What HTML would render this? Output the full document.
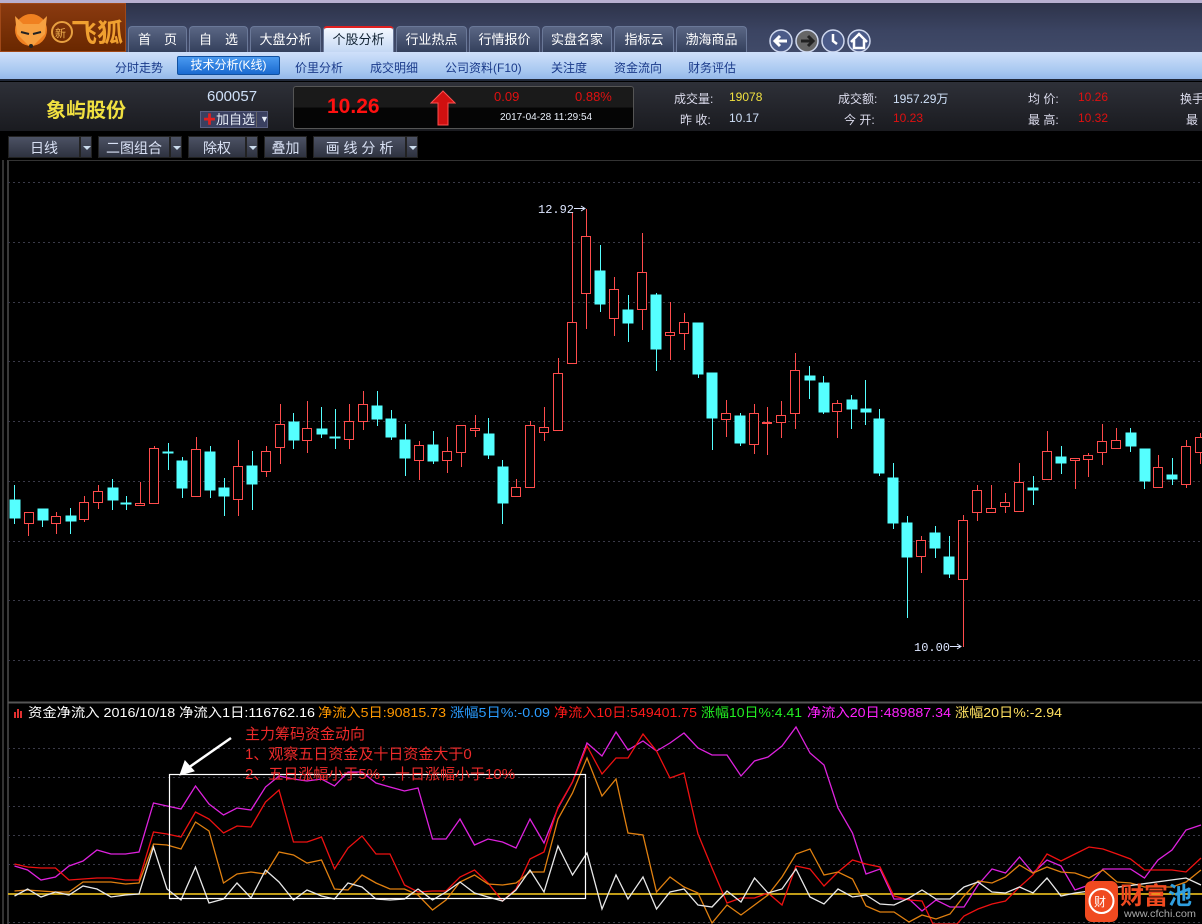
<!DOCTYPE html>
<html><head><meta charset="utf-8">
<style>
*{margin:0;padding:0;box-sizing:border-box}
body{width:1202px;height:924px;overflow:hidden;background:#000;font-family:"Liberation Sans","Noto Sans CJK SC",sans-serif;position:relative}
.abs{position:absolute;white-space:nowrap}
#top{left:0;top:0;width:1202px;height:52px;background:linear-gradient(#2c3147,#3b4462 60%,#404a68)}
#topline{left:0;top:0;width:1202px;height:3px;background:#b8b0d0}
#logo{left:0;top:3px;width:126px;height:49px;background:linear-gradient(#8a3a10,#6a2800);border:1px solid #a04818}
.tab{top:26px;height:26px;background:linear-gradient(#5a6684,#34405c);border:1px solid #6a7898;border-bottom:none;border-radius:4px 4px 0 0;color:#fff;font-size:13px;text-align:center;line-height:26px}
.tab.on{background:linear-gradient(#f4f8ff,#c4d8f4);color:#123;border-top:2px solid #e02020;line-height:24px}
#sub{left:0;top:52px;width:1202px;height:29px;background:linear-gradient(#cfe0fa,#a8c8f0 70%,#94b8ea);border-bottom:2px solid #202838}
.s{top:59px;font-size:12px;color:#1a3a8a}
#sbtn{left:177px;top:56px;width:103px;height:19px;background:linear-gradient(#4a9af0,#1a6ad0);border:1px solid #1050a0;border-radius:2px;color:#fff;font-size:12px;text-align:center;line-height:17px}
#info{left:0;top:82px;width:1202px;height:49px;background:linear-gradient(#2e3038,#1a1b20)}
#qbox{left:293px;top:86px;width:341px;height:43px;background:linear-gradient(#1a1a1a 50%,#050505 50%);border:1px solid #555;border-radius:3px}
.i{font-size:12px;color:#dde}
.btn{top:136px;height:22px;background:linear-gradient(#4c5264,#2e3240);color:#d8e0f4;font-size:14px;line-height:22px;text-align:center;border:1px solid #222}
.dd{top:136px;width:12px;height:22px;background:linear-gradient(#4c5264,#2e3240);border:1px solid #222}
.dd:after{content:"";position:absolute;left:2px;top:9px;border:4px solid transparent;border-top:4px solid #cde}
</style></head><body>
<div class="abs" id="top"></div><div class="abs" id="topline"></div>
<div class="abs" id="logo">
<svg width="126" height="49"><circle cx="30" cy="26" r="16" fill="#f08020"/><path d="M14 12 L22 20 L38 20 L46 12 L44 30 L30 44 L16 30Z" fill="#f7a040"/><path d="M20 28 L28 30 M32 30 L40 28" stroke="#222" stroke-width="2"/><circle cx="30" cy="42" r="2" fill="#222"/>
<circle cx="61" cy="28" r="10" fill="none" stroke="#e8a040" stroke-width="2"/><text x="54" y="33" font-size="11" fill="#f0b050" font-family="Noto Sans CJK SC">新</text>
<text x="70" y="38" font-size="26" font-weight="bold" fill="#f0a030" font-family="Noto Sans CJK SC">飞狐</text></svg></div>
<div class="abs tab" style="left:128px;width:59px">首　页</div>
<div class="abs tab" style="left:189px;width:59px">自　选</div>
<div class="abs tab" style="left:250px;width:71px">大盘分析</div>
<div class="abs tab on" style="left:323px;width:71px">个股分析</div>
<div class="abs tab" style="left:396px;width:71px">行业热点</div>
<div class="abs tab" style="left:469px;width:71px">行情报价</div>
<div class="abs tab" style="left:542px;width:70px">实盘名家</div>
<div class="abs tab" style="left:614px;width:60px">指标云</div>
<div class="abs tab" style="left:676px;width:71px">渤海商品</div>
<svg class="abs" style="left:766px;top:28px" width="108" height="26">
<g stroke="#cfd8ee" stroke-width="1.5"><circle cx="15" cy="13" r="11" fill="#4a5a88"/><circle cx="41" cy="13" r="11" fill="#666"/><circle cx="67" cy="13" r="11" fill="#4a5a88"/><circle cx="93" cy="13" r="11" fill="#4a5a88"/></g>
<path d="M21 13H10M14 8L9 13L14 18" stroke="#fff" stroke-width="3" fill="none"/>
<path d="M35 13H46M42 8L47 13L42 18" stroke="#222" stroke-width="3" fill="none"/>
<path d="M67 6V13L71 16" stroke="#fff" stroke-width="2.5" fill="none"/>
<path d="M85 14L93 6L101 14M88 12V20H98V12" stroke="#fff" stroke-width="2.5" fill="none"/></svg>
<div class="abs" id="sub"></div>
<div class="abs s" style="left:115px">分时走势</div>
<div class="abs" id="sbtn">技术分析(K线)</div>
<div class="abs s" style="left:295px">价里分析</div>
<div class="abs s" style="left:370px">成交明细</div>
<div class="abs s" style="left:445px">公司资料(F10)</div>
<div class="abs s" style="left:551px">关注度</div>
<div class="abs s" style="left:614px">资金流向</div>
<div class="abs s" style="left:688px">财务评估</div>
<div class="abs" id="info"></div>
<div class="abs" style="left:46px;top:94px;font-size:20px;font-weight:bold;color:#f0e040">象屿股份</div>
<div class="abs" style="left:207px;top:88px;font-size:15px;color:#cfe0f8">600057</div>
<div class="abs" style="left:200px;top:111px;width:68px;height:17px;background:#3a4060;border:1px solid #5a6080;font-size:13px;color:#e8eef8;line-height:15px;padding-left:2px"><span style="color:#e02020;font-weight:bold">✚</span>加自选<span style="position:absolute;left:55px;top:0;border-left:1px solid #666;padding-left:3px;font-size:9px">▼</span></div>
<div class="abs" id="qbox"></div>
<div class="abs" style="left:327px;top:95px;font-size:21px;font-weight:bold;color:#ff1010">10.26</div>
<svg class="abs" style="left:430px;top:90px" width="26" height="36"><path d="M13 1L25 13H18V35H8V13H1Z" fill="#d01010" stroke="#ff5050"/></svg>
<div class="abs" style="left:494px;top:89px;font-size:13px;color:#e01010">0.09</div>
<div class="abs" style="left:575px;top:89px;font-size:13px;color:#e01010">0.88%</div>
<div class="abs" style="left:500px;top:112px;font-size:10px;color:#e8eef8">2017-04-28 11:29:54</div>
<div class="abs i" style="left:674px;top:90px">成交量:</div><div class="abs i" style="left:729px;top:90px;color:#f0e040">19078</div>
<div class="abs i" style="left:680px;top:111px">昨 收:</div><div class="abs i" style="left:729px;top:111px;color:#cfe0f8">10.17</div>
<div class="abs i" style="left:838px;top:90px">成交额:</div><div class="abs i" style="left:893px;top:90px;color:#cfe0f8">1957.29万</div>
<div class="abs i" style="left:844px;top:111px">今 开:</div><div class="abs i" style="left:893px;top:111px;color:#e01010">10.23</div>
<div class="abs i" style="left:1028px;top:90px">均 价:</div><div class="abs i" style="left:1078px;top:90px;color:#e01010">10.26</div>
<div class="abs i" style="left:1028px;top:111px">最 高:</div><div class="abs i" style="left:1078px;top:111px;color:#e01010">10.32</div>
<div class="abs i" style="left:1180px;top:90px">换手</div><div class="abs i" style="left:1186px;top:111px">最</div>
<div class="abs btn" style="left:8px;width:72px">日线</div><div class="abs dd" style="left:80px"></div>
<div class="abs btn" style="left:98px;width:72px">二图组合</div><div class="abs dd" style="left:170px"></div>
<div class="abs btn" style="left:188px;width:58px">除权</div><div class="abs dd" style="left:246px"></div>
<div class="abs btn" style="left:264px;width:43px">叠加</div>
<div class="abs btn" style="left:313px;width:93px">画 线 分 析</div><div class="abs dd" style="left:406px"></div>

<svg class="abs" style="left:0;top:160px" width="1202" height="764" viewBox="0 160 1202 764">
<rect x="2" y="160" width="2" height="764" fill="#333"/><rect x="7" y="160" width="2" height="764" fill="#3a3a3a"/>
<line x1="8" y1="160.5" x2="1202" y2="160.5" stroke="#333"/>
<line x1="8" y1="702.5" x2="1202" y2="702.5" stroke="#555" stroke-width="2"/>
<g stroke="#3a3a48" stroke-dasharray="2 3">
<line x1="8" x2="1202" y1="182.5" y2="182.5"/><line x1="8" x2="1202" y1="242.5" y2="242.5"/><line x1="8" x2="1202" y1="302.5" y2="302.5"/><line x1="8" x2="1202" y1="361.5" y2="361.5"/><line x1="8" x2="1202" y1="421.5" y2="421.5"/><line x1="8" x2="1202" y1="481.5" y2="481.5"/><line x1="8" x2="1202" y1="541.5" y2="541.5"/><line x1="8" x2="1202" y1="600.5" y2="600.5"/><line x1="8" x2="1202" y1="660.5" y2="660.5"/>
<line x1="8" x2="1202" y1="748.5" y2="748.5"/><line x1="8" x2="1202" y1="777.5" y2="777.5"/><line x1="8" x2="1202" y1="806.5" y2="806.5"/><line x1="8" x2="1202" y1="835.5" y2="835.5"/><line x1="8" x2="1202" y1="864.5" y2="864.5"/><line x1="8" x2="1202" y1="922.5" y2="922.5"/>
</g>
<g stroke="#55ffff" fill="#55ffff">
<line x1="14.5" y1="485" x2="14.5" y2="524"/><rect x="10" y="500" width="10" height="18"/>
<line x1="42.5" y1="509" x2="42.5" y2="527"/><rect x="38" y="509" width="10" height="11"/>
<line x1="70.5" y1="508" x2="70.5" y2="534"/><rect x="66" y="516" width="10" height="5"/>
<line x1="112.5" y1="479" x2="112.5" y2="510"/><rect x="108" y="488" width="10" height="12"/>
<line x1="126.5" y1="496" x2="126.5" y2="510"/><rect x="121" y="503" width="10" height="1"/>
<line x1="168.5" y1="443" x2="168.5" y2="470"/><rect x="163" y="452" width="10" height="1"/>
<line x1="182.5" y1="457" x2="182.5" y2="498"/><rect x="177" y="461" width="10" height="27"/>
<line x1="210.5" y1="446" x2="210.5" y2="498"/><rect x="205" y="452" width="10" height="38"/>
<line x1="224.5" y1="478" x2="224.5" y2="516"/><rect x="219" y="488" width="10" height="8"/>
<line x1="252.5" y1="451" x2="252.5" y2="510"/><rect x="247" y="466" width="10" height="18"/>
<line x1="293.5" y1="413" x2="293.5" y2="449"/><rect x="289" y="422" width="10" height="18"/>
<line x1="321.5" y1="407" x2="321.5" y2="438"/><rect x="317" y="429" width="10" height="5"/>
<line x1="335.5" y1="409" x2="335.5" y2="449"/><rect x="330" y="437" width="10" height="1"/>
<line x1="377.5" y1="391" x2="377.5" y2="426"/><rect x="372" y="406" width="10" height="13"/>
<line x1="391.5" y1="410" x2="391.5" y2="440"/><rect x="386" y="419" width="10" height="18"/>
<line x1="405.5" y1="424" x2="405.5" y2="476"/><rect x="400" y="440" width="10" height="18"/>
<line x1="433.5" y1="431" x2="433.5" y2="464"/><rect x="428" y="445" width="10" height="16"/>
<line x1="488.5" y1="418" x2="488.5" y2="459"/><rect x="484" y="434" width="10" height="21"/>
<line x1="502.5" y1="460" x2="502.5" y2="524"/><rect x="498" y="467" width="10" height="36"/>
<line x1="600.5" y1="245" x2="600.5" y2="312"/><rect x="595" y="271" width="10" height="33"/>
<line x1="628.5" y1="295" x2="628.5" y2="342"/><rect x="623" y="310" width="10" height="13"/>
<line x1="656.5" y1="293" x2="656.5" y2="371"/><rect x="651" y="295" width="10" height="54"/>
<line x1="698.5" y1="323" x2="698.5" y2="378"/><rect x="693" y="323" width="10" height="51"/>
<line x1="712.5" y1="373" x2="712.5" y2="450"/><rect x="707" y="373" width="10" height="45"/>
<line x1="740.5" y1="413" x2="740.5" y2="446"/><rect x="735" y="416" width="10" height="27"/>
<line x1="809.5" y1="366" x2="809.5" y2="399"/><rect x="805" y="376" width="10" height="4"/>
<line x1="823.5" y1="376" x2="823.5" y2="414"/><rect x="819" y="383" width="10" height="29"/>
<line x1="851.5" y1="395" x2="851.5" y2="429"/><rect x="847" y="400" width="10" height="9"/>
<line x1="865.5" y1="380" x2="865.5" y2="425"/><rect x="861" y="409" width="10" height="3"/>
<line x1="879.5" y1="409" x2="879.5" y2="476"/><rect x="874" y="419" width="10" height="54"/>
<line x1="893.5" y1="463" x2="893.5" y2="529"/><rect x="888" y="478" width="10" height="45"/>
<line x1="907.5" y1="516" x2="907.5" y2="618"/><rect x="902" y="523" width="10" height="34"/>
<line x1="935.5" y1="526" x2="935.5" y2="558"/><rect x="930" y="533" width="10" height="15"/>
<line x1="949.5" y1="536" x2="949.5" y2="578"/><rect x="944" y="557" width="10" height="17"/>
<line x1="1033.5" y1="476" x2="1033.5" y2="505"/><rect x="1028" y="488" width="10" height="2"/>
<line x1="1061.5" y1="446" x2="1061.5" y2="474"/><rect x="1056" y="457" width="10" height="6"/>
<line x1="1130.5" y1="428" x2="1130.5" y2="452"/><rect x="1126" y="433" width="10" height="13"/>
<line x1="1144.5" y1="449" x2="1144.5" y2="489"/><rect x="1140" y="449" width="10" height="32"/>
<line x1="1172.5" y1="458" x2="1172.5" y2="485"/><rect x="1167" y="475" width="10" height="4"/>
</g>
<g stroke="#ff4c4c" fill="#000">
<line x1="28.5" y1="512" x2="28.5" y2="536"/><rect x="24.5" y="512.5" width="9" height="11"/>
<line x1="56.5" y1="512" x2="56.5" y2="534"/><rect x="51.5" y="516.5" width="9" height="7"/>
<line x1="84.5" y1="496" x2="84.5" y2="522"/><rect x="79.5" y="502.5" width="9" height="17"/>
<line x1="98.5" y1="485" x2="98.5" y2="509"/><rect x="93.5" y="491.5" width="9" height="11"/>
<line x1="140.5" y1="482" x2="140.5" y2="506"/><rect x="135.5" y="503.5" width="9" height="2"/>
<line x1="154.5" y1="446" x2="154.5" y2="504"/><rect x="149.5" y="448.5" width="9" height="55"/>
<line x1="196.5" y1="437" x2="196.5" y2="497"/><rect x="191.5" y="449.5" width="9" height="47"/>
<line x1="238.5" y1="440" x2="238.5" y2="516"/><rect x="233.5" y="466.5" width="9" height="33"/>
<line x1="266.5" y1="446" x2="266.5" y2="477"/><rect x="261.5" y="451.5" width="9" height="20"/>
<line x1="280.5" y1="404" x2="280.5" y2="464"/><rect x="275.5" y="424.5" width="9" height="23"/>
<line x1="307.5" y1="401" x2="307.5" y2="453"/><rect x="302.5" y="428.5" width="9" height="12"/>
<line x1="349.5" y1="404" x2="349.5" y2="449"/><rect x="344.5" y="421.5" width="9" height="18"/>
<line x1="363.5" y1="391" x2="363.5" y2="430"/><rect x="358.5" y="404.5" width="9" height="17"/>
<line x1="419.5" y1="441" x2="419.5" y2="480"/><rect x="414.5" y="445.5" width="9" height="15"/>
<line x1="447.5" y1="437" x2="447.5" y2="473"/><rect x="442.5" y="451.5" width="9" height="9"/>
<line x1="461.5" y1="425" x2="461.5" y2="467"/><rect x="456.5" y="425.5" width="9" height="27"/>
<line x1="475.5" y1="415" x2="475.5" y2="437"/><rect x="470.5" y="428.5" width="9" height="2"/>
<line x1="516.5" y1="479" x2="516.5" y2="497"/><rect x="511.5" y="487.5" width="9" height="9"/>
<line x1="530.5" y1="421" x2="530.5" y2="488"/><rect x="525.5" y="425.5" width="9" height="62"/>
<line x1="544.5" y1="407" x2="544.5" y2="441"/><rect x="539.5" y="427.5" width="9" height="5"/>
<line x1="558.5" y1="358" x2="558.5" y2="431"/><rect x="553.5" y="373.5" width="9" height="57"/>
<line x1="572.5" y1="212" x2="572.5" y2="364"/><rect x="567.5" y="322.5" width="9" height="41"/>
<line x1="586.5" y1="209" x2="586.5" y2="329"/><rect x="581.5" y="236.5" width="9" height="57"/>
<line x1="614.5" y1="277" x2="614.5" y2="336"/><rect x="609.5" y="289.5" width="9" height="29"/>
<line x1="642.5" y1="233" x2="642.5" y2="330"/><rect x="637.5" y="272.5" width="9" height="37"/>
<line x1="670.5" y1="302" x2="670.5" y2="360"/><rect x="665.5" y="332.5" width="9" height="3"/>
<line x1="684.5" y1="313" x2="684.5" y2="350"/><rect x="679.5" y="322.5" width="9" height="11"/>
<line x1="726.5" y1="400" x2="726.5" y2="437"/><rect x="721.5" y="413.5" width="9" height="6"/>
<line x1="754.5" y1="404" x2="754.5" y2="454"/><rect x="749.5" y="413.5" width="9" height="31"/>
<line x1="767.5" y1="407" x2="767.5" y2="455"/><rect x="762.5" y="422.5" width="9" height="1"/>
<line x1="781.5" y1="401" x2="781.5" y2="438"/><rect x="776.5" y="415.5" width="9" height="7"/>
<line x1="795.5" y1="353" x2="795.5" y2="429"/><rect x="790.5" y="370.5" width="9" height="43"/>
<line x1="837.5" y1="400" x2="837.5" y2="438"/><rect x="832.5" y="403.5" width="9" height="8"/>
<line x1="921.5" y1="536" x2="921.5" y2="573"/><rect x="916.5" y="540.5" width="9" height="16"/>
<line x1="963.5" y1="515" x2="963.5" y2="647"/><rect x="958.5" y="520.5" width="9" height="59"/>
<line x1="977.5" y1="485" x2="977.5" y2="521"/><rect x="972.5" y="490.5" width="9" height="22"/>
<line x1="991.5" y1="485" x2="991.5" y2="513"/><rect x="986.5" y="508.5" width="9" height="4"/>
<line x1="1005.5" y1="493" x2="1005.5" y2="513"/><rect x="1000.5" y="502.5" width="9" height="4"/>
<line x1="1019.5" y1="463" x2="1019.5" y2="512"/><rect x="1014.5" y="482.5" width="9" height="29"/>
<line x1="1047.5" y1="431" x2="1047.5" y2="480"/><rect x="1042.5" y="451.5" width="9" height="28"/>
<line x1="1075.5" y1="458" x2="1075.5" y2="489"/><rect x="1070.5" y="458.5" width="9" height="2"/>
<line x1="1088.5" y1="453" x2="1088.5" y2="477"/><rect x="1083.5" y="455.5" width="9" height="4"/>
<line x1="1102.5" y1="424" x2="1102.5" y2="465"/><rect x="1097.5" y="441.5" width="9" height="11"/>
<line x1="1116.5" y1="428" x2="1116.5" y2="448"/><rect x="1111.5" y="440.5" width="9" height="8"/>
<line x1="1158.5" y1="455" x2="1158.5" y2="487"/><rect x="1153.5" y="467.5" width="9" height="20"/>
<line x1="1186.5" y1="440" x2="1186.5" y2="488"/><rect x="1181.5" y="446.5" width="9" height="38"/>
<line x1="1200.5" y1="433" x2="1200.5" y2="464"/><rect x="1195.5" y="437.5" width="9" height="15"/>
</g>
<g font-family="Liberation Mono,monospace" font-size="12" fill="#dde6ff">
<text x="538" y="213">12.92</text><path d="M574 208.5H584M581 206L585 208.5L581 211" stroke="#dde6ff" fill="none"/>
<text x="914" y="651">10.00</text><path d="M950 646.5H960M957 644L961 646.5L957 649" stroke="#dde6ff" fill="none"/>
</g>
<g font-size="13" font-family="Liberation Sans,Noto Sans CJK SC,sans-serif">
<rect x="14" y="712" width="2" height="6" fill="#e03030"/><rect x="17" y="709" width="2" height="9" fill="#e03030"/><rect x="20" y="711" width="2" height="7" fill="#e03030"/>
<text x="28" y="717" fill="#fff" textLength="287" lengthAdjust="spacingAndGlyphs">资金净流入 2016/10/18 净流入1日:116762.16</text>
<text x="318" y="717" fill="#ff9900" textLength="128" lengthAdjust="spacingAndGlyphs">净流入5日:90815.73</text>
<text x="450" y="717" fill="#2a9cff" textLength="100" lengthAdjust="spacingAndGlyphs">涨幅5日%:-0.09</text>
<text x="554" y="717" fill="#ff1a1a" textLength="143" lengthAdjust="spacingAndGlyphs">净流入10日:549401.75</text>
<text x="701" y="717" fill="#22ee22" textLength="101" lengthAdjust="spacingAndGlyphs">涨幅10日%:4.41</text>
<text x="807" y="717" fill="#ff22ff" textLength="144" lengthAdjust="spacingAndGlyphs">净流入20日:489887.34</text>
<text x="955" y="717" fill="#ffe060" textLength="107" lengthAdjust="spacingAndGlyphs">涨幅20日%:-2.94</text>
</g>
<line x1="8" y1="894" x2="1202" y2="894" stroke="#ffd020" stroke-width="1.5"/>
<g fill="none" stroke-width="1.3">
<polyline stroke="#dd22dd" points="14.5,866 27.6,870 41,880 55.5,877 69,866 83,861 97,850 111,854 125.5,854 139,852 153.5,803 167,806 181,809 195.5,786 209,804 223.5,815 237,808 251,810 265.5,787 279,776 293.5,779 307,781 321.5,779 334.5,786 348,772 362,772 376,783 390,787 404.5,791 418,788 432.5,839 446,839 460,819 474.5,845 488,839 502.5,842 516,848 530,819 544,843 558,808 572.5,782 587,743 602,756 616,732 628,750 643,741 656.5,751 670,743 684,733 698,748 712,755 727,755 741,776 754.5,761 768,757 782,746 796,727 810,753 824,765 838,808 852.5,833 866,874 880,869 894,899 909,899 922,911 936,900 950,907 964,907 978,885 992,869 1005.5,873 1019.5,857 1033,873 1047,860 1061,866 1075,890 1089,885 1103,869 1117,869 1130.5,869 1144.5,878 1158,860 1172,850 1186,830 1201,825"/>
<polyline stroke="#ee1111" points="14.5,864 27.6,867 41,868 55.5,868 69,880 83,879 97,878 111,878 125.5,880 139,880 153.5,832 167,834 181,837 195.5,812 209,819 223.5,833 237,826 251,827 265.5,802 279,790 293.5,842 307,842 321.5,837 334.5,869 348,848 362,836 376,854 390,854 404.5,885 418,892 432.5,891 446,891 460,877 474.5,870 488,883 502.5,901 516,889 530,859 544,852 558,807 572.5,782 587,746 602,774 616,758 628,758 643,734 656.5,751 670,778 684,773 698,834 712,868 727,903 741,898 754.5,898 768,893 782,905 796,866 810,869 824,886 838,872 852.5,860 866,864 880,867 894,896 909,900 922,901 933,924 957,924 964,916 978,909 992,904 1005.5,901 1019.5,887 1033,875 1047,854 1061,861 1075,854 1089,847 1103,849 1117,854 1130.5,859 1144.5,870 1172,870 1186,872 1201,858"/>
<polyline stroke="#e08010" points="14.5,891 27.6,890 41,891 55.5,892 69,892 83,882 97,882 111,882 125.5,884 139,883 153.5,844 167,845 181,849 195.5,822 209,831 223.5,883 237,874 251,872 265.5,874 279,852 293.5,855 307,863 321.5,860 334.5,889 348,890 362,875 376,883 390,889 404.5,889 418,895 432.5,910 446,900 460,882 474.5,875 488,884 502.5,885 516,883 530,872 544,872 558,819 572.5,793 587,758 602,796 616,779 628,833 643,835 656.5,892 670,877 684,887 698,893 712,923 727,905 741,915 754.5,905 768,895 782,877 796,854 810,849 824,875 838,872 852.5,879 866,906 880,912 894,912 909,922 922,915 936,919 950,914 964,896 978,881 992,883 1005.5,877 1019.5,865 1033,873 1047,867 1061,872 1075,873 1089,878 1103,870 1117,882 1130.5,883 1144.5,887 1172,887 1186,882 1201,870"/>
<polyline stroke="#e8e8e8" points="14.5,896 27.6,889 41,897 55.5,892 69,895 83,886 97,889 111,897 125.5,895 139,894 153.5,847 167,889 181,900 195.5,867 209,903 223.5,899 237,883 251,898 265.5,870 279,882 293.5,900 307,890 321.5,896 334.5,899 348,883 362,887 376,899 390,900 404.5,899 418,889 432.5,900 446,892 460,882 474.5,893 488,897 502.5,901 516,890 530,870 544,892 558,846 572.5,875 587,853 602,909 616,875 628,899 643,877 656.5,909 670,892 684,889 698,905 712,907 727,891 741,902 754.5,878 768,893 782,889 796,869 810,897 824,904 838,889 852.5,897 866,895 880,904 894,905 909,898 922,890 936,899 950,899 964,887 978,882 992,892 1005.5,893 1019.5,887 1033,893 1047,878 1061,896 1075,893 1186,878 1201,885"/>
</g>
<rect x="169.5" y="774.5" width="416" height="124" fill="none" stroke="#fff" stroke-width="1.2"/>
<path d="M231 738 L188 768" stroke="#fff" stroke-width="2.5"/><path d="M180 775 L185 761 L194 771 Z" fill="#fff" stroke="#fff"/>
<g font-size="15" fill="#ee2a2a" font-family="Liberation Sans,Noto Sans CJK SC,sans-serif">
<text x="245" y="739">主力筹码资金动向</text>
<text x="245" y="759">1、观察五日资金及十日资金大于0</text>
<text x="245" y="779">2、五日涨幅小于5%，十日涨幅小于10%</text>
</g>
<rect x="1085" y="881" width="33" height="41" rx="7" fill="#f04a20"/>
<circle cx="1101.5" cy="901" r="12" fill="none" stroke="#fff" stroke-width="2"/>
<text x="1094" y="906" font-size="12" fill="#fff" font-family="Noto Sans CJK SC">财</text>
<text x="1120" y="904" font-size="24" font-weight="bold" fill="#f04a20" font-family="Noto Sans CJK SC">财富<tspan fill="#2f9fe0">池</tspan></text>
<text x="1124" y="917" font-size="10" fill="#aaa" textLength="72" lengthAdjust="spacingAndGlyphs">www.cfchi.com</text>
</svg>
</body></html>
